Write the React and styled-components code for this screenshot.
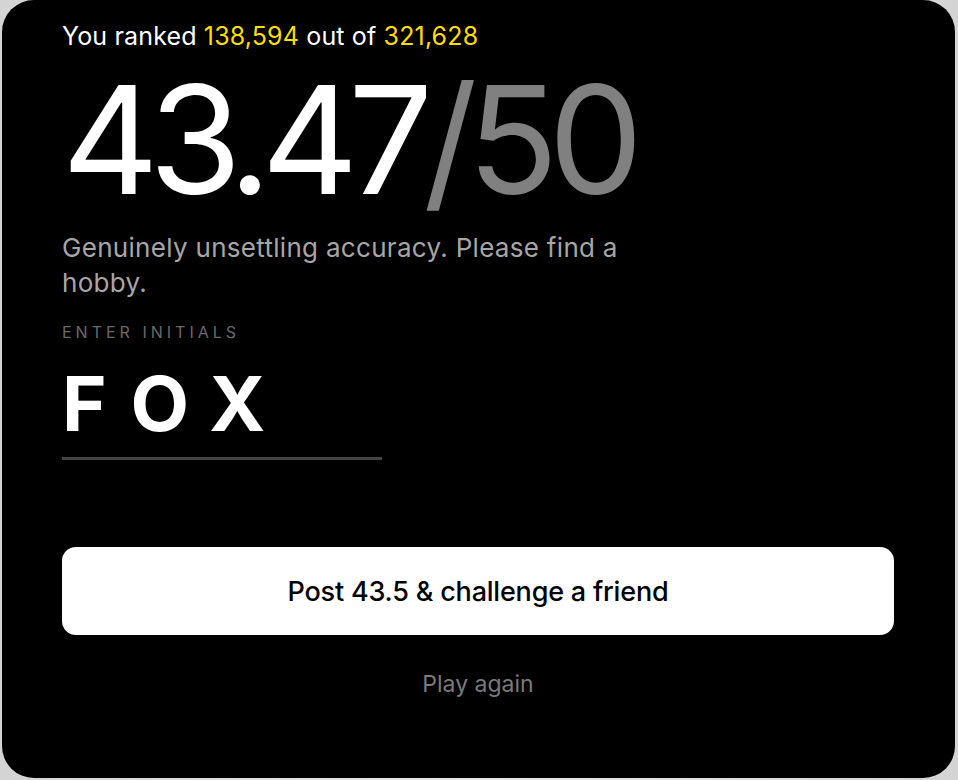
import React from 'react';
import styled, { createGlobalStyle } from 'styled-components';

const GlobalStyle = createGlobalStyle`
  html, body {
    margin: 0;
    padding: 0;
    background: linear-gradient(90deg, #d4d4d4 0%, #e6e6e6 50%, #d4d4d4 100%);
    font-family: Inter, "Noto Sans", "Liberation Sans", sans-serif;
  }
`;

const Page = styled.div`
  width: 958px;
  height: 780px;
  padding: 0 3px 2px 2px;
  box-sizing: border-box;
`;

const Card = styled.main`
  height: 100%;
  box-sizing: border-box;
  background: #000;
  border-radius: 32px;
  padding: 24px 61px 0 60px;
  display: flex;
  flex-direction: column;
`;

const Rank = styled.p`
  margin: 0;
  font-size: 25px;
  line-height: 25px;
  letter-spacing: 0.15px;
  color: #fff;
`;

const Highlight = styled.span`
  color: #ffdd00;
`;

const Score = styled.h1`
  margin: 16px 0 0;
  font-size: 150px;
  font-weight: 400;
  line-height: 150px;
  letter-spacing: -10px;
  color: #fff;
`;

const Total = styled.span`
  color: #808080;
`;

const Verdict = styled.p`
  margin: 15px 0 0;
  max-width: 620px;
  font-size: 26px;
  line-height: 35px;
  letter-spacing: 0.3px;
  color: #a6a6a6;
`;

const Label = styled.div`
  margin-top: 22px;
  font-size: 16px;
  line-height: 20px;
  letter-spacing: 4px;
  color: #6a6a6a;
`;

const Initials = styled.div`
  width: 320px;
  margin-top: 21px;
  padding-bottom: 14px;
  border-bottom: 3px solid #444;
  font-size: 76px;
  font-weight: 700;
  line-height: 80px;
  letter-spacing: 24px;
  color: #fff;
`;

const PostButton = styled.button`
  margin-top: 87px;
  height: 88px;
  padding: 0;
  border: 0;
  border-radius: 14px;
  background: #fff;
  color: #000;
  font-family: inherit;
  font-size: 27px;
  font-weight: 500;
  letter-spacing: -0.2px;
  cursor: pointer;
`;

const PlayAgain = styled.button`
  align-self: center;
  margin-top: 35px;
  padding: 0;
  border: 0;
  background: none;
  color: #7a7a7a;
  font-family: inherit;
  font-size: 23px;
  line-height: 28px;
  cursor: pointer;
`;

const App = () => (
  <Page>
    <GlobalStyle />
    <Card>
      <Rank>
        You ranked <Highlight>138,594</Highlight> out of <Highlight>321,628</Highlight>
      </Rank>
      <Score>
        43.47<Total>/50</Total>
      </Score>
      <Verdict>Genuinely unsettling accuracy. Please find a hobby.</Verdict>
      <Label>ENTER INITIALS</Label>
      <Initials>FOX</Initials>
      <PostButton>Post 43.5 &amp; challenge a friend</PostButton>
      <PlayAgain>Play again</PlayAgain>
    </Card>
  </Page>
);

export default App;
